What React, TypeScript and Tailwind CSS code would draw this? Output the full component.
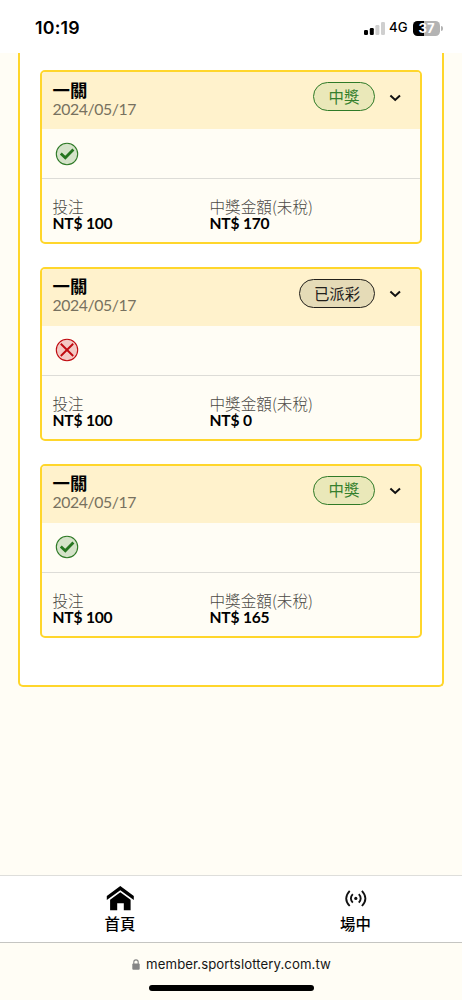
type Status = "win" | "paid";

const bets: { status: Status; label: string; payout: string }[] = [
  { status: "win", label: "中獎", payout: "NT$ 170" },
  { status: "paid", label: "已派彩", payout: "NT$ 0" },
  { status: "win", label: "中獎", payout: "NT$ 165" },
];

function CheckIcon() {
  return (
    <svg className="h-6 w-6" viewBox="0 0 24 24" fill="none">
      <circle cx="12" cy="12" r="10.7" fill="#d5e3c9" stroke="#2f7a27" strokeWidth="1.1" />
      <path d="M5.8 11.6 10.3 15.8 18.4 7.5" stroke="#25751f" strokeWidth="2.8" />
    </svg>
  );
}

function CrossIcon() {
  return (
    <svg className="h-6 w-6" viewBox="0 0 24 24" fill="none">
      <circle cx="12" cy="12" r="10.7" fill="#f3c9c4" stroke="#c00a10" strokeWidth="1.1" />
      <path d="M5.8 5.8 18.2 18M18.2 5.8 5.8 18" stroke="#c00a10" strokeWidth="1.9" />
    </svg>
  );
}

function Field({ label, value }: { label: string; value: string }) {
  return (
    <div className="flex flex-col">
      <span className="h-[17px] font-['Noto_Sans_CJK_TC',sans-serif] text-[15.6px] leading-[17px] font-light whitespace-nowrap text-[#4c4a45]">{label}</span>
      <span className="h-[17px] text-[15.6px] leading-[17px] font-bold tracking-[-0.2px] text-black">{value}</span>
    </div>
  );
}

function BetCard({ bet }: { bet: (typeof bets)[number] }) {
  const win = bet.status === "win";
  return (
    <article className="flex h-[174px] shrink-0 flex-col overflow-hidden rounded-[5px] border-2 border-[#ffd62b] bg-[#fffdf5]">
      <header className="flex h-[57px] shrink-0 items-start bg-[#fff2cc] pr-[19px] pl-[10.5px]">
        <div className="flex grow flex-col pt-[8.5px]">
          <span className="h-[19px] text-[17.4px] leading-[19px] font-bold text-black">一關</span>
          <span className="h-[18px] text-[15.8px] leading-[18px] tracking-[-0.4px] text-[#77715f]">2024/05/17</span>
        </div>
        <div
          className={`mt-[10px] flex h-[29px] items-center justify-center rounded-full border font-['Noto_Sans_CJK_TC',sans-serif] text-[15.4px] leading-none font-normal ${
            win ? "w-[62px] border-[#2f7a27] bg-[#eae8b9] text-[#35802d]" : "w-[76px] border-[#22201b] bg-[#e5dbb7] text-[#22201b]"
          }`}
        >
          {bet.label}
        </div>
        <svg className="mt-[21.5px] ml-[14px] h-[8px] w-[12px]" viewBox="0 0 12 8" fill="none">
          <path d="m1.4 1.4 4.8 4.5L11 1.4" stroke="#111" strokeWidth="2" />
        </svg>
      </header>
      <div className="flex h-[50px] shrink-0 items-center border-b border-[#dddcd7] pl-[13px]">{win ? <CheckIcon /> : <CrossIcon />}</div>
      <div className="grid grid-cols-[157px_1fr] pt-[19.3px] pl-[10.5px]">
        <Field label="投注" value="NT$ 100" />
        <Field label="中獎金額(未稅)" value={bet.payout} />
      </div>
    </article>
  );
}

function StatusBar() {
  return (
    <div className="flex h-[53px] shrink-0 items-start justify-between bg-white pt-[17px] pr-[19px] pl-[35px] font-['Inter',sans-serif]">
      <span className="text-[17.8px] leading-[22px] font-semibold tracking-[0.2px] text-black">10:19</span>
      <div className="flex h-[22px] items-center">
        <svg className="h-[13px] w-[21px]" viewBox="0 0 21 13">
          <rect x="0" y="8" width="4" height="5" rx="1.2" />
          <rect x="5.8" y="6" width="4" height="7" rx="1.2" />
          <rect x="11.4" y="3" width="4" height="10" rx="1.2" fill="#cfcfcf" />
          <rect x="17" y="0" width="4" height="13" rx="1.2" fill="#cfcfcf" />
        </svg>
        <span className="ml-[4px] w-[19px] text-[13.2px] leading-none font-medium whitespace-nowrap">4G</span>
        <span className="ml-[5px] flex h-[15px] w-[27px] items-center justify-center rounded-[4.5px] bg-linear-to-r from-black from-40% to-[#b3b3b3] to-40% text-[13px] leading-none font-bold text-white">37</span>
        <span className="ml-px h-[5px] w-[2px] rounded-r-full bg-[#b3b3b3]" />
      </div>
    </div>
  );
}

export default function App() {
  return (
    <div className="flex h-[1000px] w-[462px] flex-col overflow-hidden bg-[#fffdf5] font-['Lato','Noto_Sans_CJK_TC',sans-serif]">
      <StatusBar />
      <main className="flex min-h-0 grow flex-col px-[18px]">
        <section className="flex h-[634px] flex-col gap-[22.75px] rounded-b-[5px] border-2 border-t-0 border-[#ffd62b] bg-white px-5 pt-[17px]">
          {bets.map((bet, i) => (
            <BetCard key={i} bet={bet} />
          ))}
        </section>
      </main>
      <nav className="grid h-[67px] shrink-0 grid-cols-[240px_1fr] border-t border-[#dededb] bg-white font-['Noto_Sans_CJK_TC',sans-serif] text-[15.4px] leading-[18px] font-medium text-black">
        <div className="flex flex-col items-center pt-[9px]">
          <svg className="h-[26px] w-[28px]" viewBox="0 0 28 26">
            <path d="M14.3 1 27.8 11v4L14.3 5.2.8 15v-4Z" />
            <path d="M14.3 7.2 24.6 14.7V25.2H17.8v-7h-6.6v7H4.1V14.7Z" />
          </svg>
          <span className="mt-[3px]">首頁</span>
        </div>
        <div className="flex flex-col items-center pt-[13px] pl-[9px]">
          <svg className="h-[18px] w-[22px]" viewBox="0 0 22 18" fill="none" stroke="#111" strokeWidth="1.8">
            <circle cx="10.8" cy="9.4" r="1.6" fill="#111" stroke="none" />
            <path d="M7.8 5.2q-3.8 4.2 0 8.4M13.8 5.2q3.8 4.2 0 8.4M4.7 1.8q-7 7.6 0 15.2M16.9 1.8q7 7.6 0 15.2" />
          </svg>
          <span className="mt-[7px]">場中</span>
        </div>
      </nav>
      <footer className="flex h-[58px] shrink-0 flex-col items-center border-t border-[#c5c5c2] font-['Inter',sans-serif]">
        <div className="mt-[12px] flex h-[18px] items-center pl-px">
          <svg className="mr-[6px] h-[11px] w-[8px]" viewBox="0 0 8 11" fill="none">
            <path d="M1.8 5V3.1a2.2 2.2 0 0 1 4.4 0V5" stroke="#858585" strokeWidth="1.1" />
            <rect x=".3" y="4.6" width="7.4" height="6.2" rx="1" fill="#858585" />
          </svg>
          <span className="text-[13.2px] leading-[18px] tracking-[0.08px] text-[#161616]">member.sportslottery.com.tw</span>
        </div>
        <div className="mt-[12px] h-[6px] w-[165px] rounded-full bg-black" />
      </footer>
    </div>
  );
}
